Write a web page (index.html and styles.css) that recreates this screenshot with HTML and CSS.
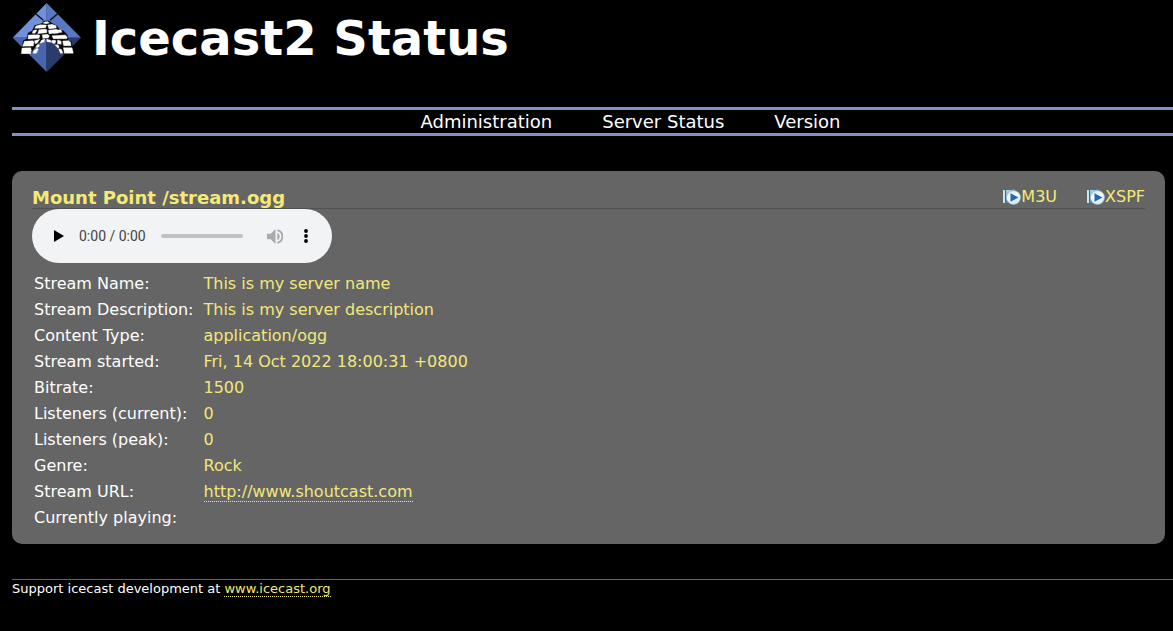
FILE: index.html
```html
<!DOCTYPE html>
<html lang="en">
<head>
<meta charset="utf-8">
<title>Icecast2 Status</title>
<link rel="stylesheet" href="styles.css">
</head>
<body>
<svg class="symbols" width="0" height="0" aria-hidden="true">
  <defs>
    <linearGradient id="disc" x1="0" y1="0" x2="0.3" y2="1">
      <stop offset="0" stop-color="#c4dcee"/>
      <stop offset="0.5" stop-color="#ffffff"/>
      <stop offset="1" stop-color="#d5eafa"/>
    </linearGradient>
    <linearGradient id="sheet" x1="0" y1="0" x2="0" y2="1">
      <stop offset="0" stop-color="#a9d3ea"/>
      <stop offset="1" stop-color="#5c8299"/>
    </linearGradient>
    <symbol id="playlist" viewBox="0 0 20 18">
      <path d="M2 2h2v13H2z" fill="#cbe4f1"/>
      <path d="M4 3h1v12H4z" fill="#47687c"/>
      <path d="M5 2h7v13H5z" fill="url(#sheet)"/>
      <path d="M9 3l4-2 1 3z" fill="#6aa6cb"/>
      <circle cx="12.500" cy="9.500" r="7" fill="url(#disc)" stroke="#8fb3cc" stroke-width="0.6"/>
      <path d="M9.500 5.200l8 4.300-8 4.300z" fill="#2469b3"/>
    </symbol>
  </defs>
</svg>
<header class="header">
  <svg class="logo" viewBox="0 3 210 210" role="img" aria-label="Icecast">
    <path d="M104 3L207 107H104z" fill="#5878c3"/>
    <path d="M104 3L2 107h102z" fill="#7090dc"/>
    <path d="M2 107h102v103z" fill="#4865ad"/>
    <path d="M207 107H104v103z" fill="#2b3b6c"/>
    <path d="M50 17l44 38M158 17l-44 38" fill="none" stroke="#0a0d18" stroke-width="4"/>
    <path d="M26 154L33 116 44 110 48 92 60 86 68 70 90 64 95 56h16l8 6 17 10 6 10 13 4 12 14 2 14 10 5 8 36h-40l-16-32-20-10h-14l-20 12-22 31z" fill="#080808"/>
    <g fill="#fff" stroke="#fff" stroke-width="1" stroke-linejoin="round">
      <path d="M93 63l7-4h8l4 4-10 2z"/>
      <path d="M72 72l12-4 19 1-2 8-20 2-13 0z"/>
      <path d="M107 69l13-2 12 4 1 7-22 3z"/>
      <path d="M63 86l9-3 3 2-6 9-8 0z"/>
      <path d="M81 83l18-2 6 3-1 8-27 3z"/>
      <path d="M109 85l24-3 7 3-1 8-28 2z"/>
      <path d="M122 86l25-3 3 8-24 3z"/>
      <path d="M49 99l28-1 7 2-3 9-33 2z"/>
      <path d="M91 98l16-1 5 4-3 7-17 1z"/>
      <path d="M120 101l40-2 6 6-2 5-40 0z"/>
      <path d="M37 118l26-2 3 5-2 11-32 1z"/>
      <path d="M67 116l16-4-7 11-6 2z"/>
      <path d="M88 115l11-5-3 10-12 4z"/>
      <path d="M104 111l12 4 1 6-12-2z"/>
      <path d="M120 115l10 0 2 4-6 7-8-6z"/>
      <path d="M137 114l10 3 1 10-12-2z"/>
      <path d="M152 117l19-1 5 6 1 9-22 0z"/>
      <path d="M30 138l26-1 2 8-2 10H28z"/>
      <path d="M72 132l8-5 3 4-8 7z"/>
      <path d="M66 145l9-6 4 3-6 12H63z"/>
      <path d="M129 129l9-1 4 7-4 4z"/>
      <path d="M140 140l8 2 5 12h-8z"/>
      <path d="M154 137h26l4 17h-27z"/>
    </g>
  </svg>
  <h1 class="title">Icecast2 Status</h1>
</header>

<nav class="menu">
  <a href="#admin">Administration</a>
  <a href="#status">Server Status</a>
  <a href="#version">Version</a>
</nav>

<main class="mount">
  <div class="mount-head">
    <h2 class="mount-name">Mount Point /stream.ogg</h2>
    <div class="playlists">
      <a href="#m3u"><svg class="playlist-icon" aria-hidden="true"><use href="#playlist"/></svg>M3U</a>
      <a href="#xspf"><svg class="playlist-icon" aria-hidden="true"><use href="#playlist"/></svg>XSPF</a>
    </div>
  </div>

  <div class="player">
    <button class="play" type="button" aria-label="Play"><svg viewBox="0 0 12 12"><path d="M2 0l10 6-10 6z"/></svg></button>
    <span class="time">0:00 / 0:00</span>
    <input class="seek" type="range" value="0" aria-label="Seek" disabled>
    <button class="mute" type="button" aria-label="Mute" disabled><svg viewBox="0 0 18 18"><path d="M1 6v6h4l5 5V1L5 6z"/><path d="M12 5.300a4 4 0 0 1 0 7.400z"/><path d="M12 2.200a7 7 0 0 1 0 13.600" fill="none" stroke="currentColor" stroke-width="2"/></svg></button>
    <button class="more" type="button" aria-label="More options"><svg viewBox="0 0 4 14"><circle cx="2" cy="2" r="1.900"/><circle cx="2" cy="7" r="1.900"/><circle cx="2" cy="12" r="1.900"/></svg></button>
  </div>

  <table class="stats">
    <tbody>
      <tr><th scope="row">Stream Name:</th><td>This is my server name</td></tr>
      <tr><th scope="row">Stream Description:</th><td>This is my server description</td></tr>
      <tr><th scope="row">Content Type:</th><td>application/ogg</td></tr>
      <tr><th scope="row">Stream started:</th><td>Fri, 14 Oct 2022 18:00:31 +0800</td></tr>
      <tr><th scope="row">Bitrate:</th><td>1500</td></tr>
      <tr><th scope="row">Listeners (current):</th><td>0</td></tr>
      <tr><th scope="row">Listeners (peak):</th><td>0</td></tr>
      <tr><th scope="row">Genre:</th><td>Rock</td></tr>
      <tr><th scope="row">Stream URL:</th><td><a class="link" href="#shoutcast">http://www.shoutcast.com</a></td></tr>
      <tr><th scope="row">Currently playing:</th><td></td></tr>
    </tbody>
  </table>
</main>

<footer class="footer">Support icecast development at <a class="link" href="#icecast">www.icecast.org</a></footer>
</body>
</html>
```
FILE: styles.css
```css
* {
  box-sizing: border-box;
}

body {
  margin: 0;
  padding-left: 12px;
  background: #000;
  color: #fff;
  font-family: Verdana, "DejaVu Sans", sans-serif;
  font-size: 16px;
}

.symbols {
  position: absolute;
}

.header {
  display: flex;
  align-items: center;
  gap: 10px;
  height: 76px;
}

.logo {
  width: 70px;
  height: 70px;
}

.title {
  margin: 0;
  font-size: 48px;
  line-height: 60px;
}

.menu {
  display: flex;
  justify-content: center;
  gap: 50px;
  margin-top: 31px;
  padding: 1px 0 0 76px;
  border-top: 3px solid #7e96bf;
  border-bottom: 3px solid #7e96bf;
  font-size: 18px;
  line-height: 22px;
}

.menu a {
  color: #fff;
  text-decoration: none;
}

.mount {
  margin: 35px 8px 0 0;
  padding: 14px 20px 12px;
  border-radius: 10px;
  background: #656565;
}

.mount-head {
  display: flex;
  justify-content: space-between;
  height: 24px;
  border-bottom: 1px solid #505050;
  color: #f5ea75;
}

.mount-name {
  margin: 0;
  font-size: 18px;
  line-height: 25px;
}

.playlists {
  display: flex;
  gap: 28px;
  line-height: 22px;
}

.playlists a {
  display: flex;
  align-items: center;
  color: inherit;
  text-decoration: none;
}

.playlist-icon {
  width: 20px;
  height: 18px;
}

.player {
  display: flex;
  align-items: center;
  width: 300px;
  height: 54px;
  padding: 0 20px;
  border-radius: 27px;
  background: #f1f3f4;
  color: #000;
}

.player button {
  display: flex;
  padding: 0;
  border: 0;
  background: none;
  color: inherit;
}

.player svg {
  fill: currentColor;
}

.play svg {
  width: 12px;
  height: 12px;
}

.time {
  margin-left: 15px;
  color: #444;
  font-family: Roboto, sans-serif;
  font-size: 14px;
}

.seek {
  flex: 1;
  min-width: 0;
  height: 4px;
  margin: 0 23px 0 15px;
  border-radius: 2px;
  background: #c2c2c2;
  appearance: none;
}

.seek::-webkit-slider-thumb {
  width: 0;
  height: 0;
  appearance: none;
}

.player .mute {
  margin-right: 21px;
  color: #a9abac;
}

.mute svg {
  width: 17px;
  height: 17px;
}

.more svg {
  width: 4px;
  height: 14px;
}

.more {
  margin-right: 4px;
}

.stats {
  margin-top: 7px;
  border-spacing: 2px;
  line-height: 22px;
}

.stats th,
.stats td {
  height: 24px;
  padding: 1px;
  text-align: left;
}

.stats th {
  padding: 1px 7px 1px 0;
  font-weight: normal;
}

.stats td {
  color: #f2e87a;
}

.link {
  border-bottom: 1px dotted currentColor;
  color: #f2e87a;
  line-height: 1;
  text-decoration: none;
}

.footer {
  margin-top: 35px;
  border-top: 1px solid #656565;
  font-size: 13px;
  line-height: 18px;
}
```
